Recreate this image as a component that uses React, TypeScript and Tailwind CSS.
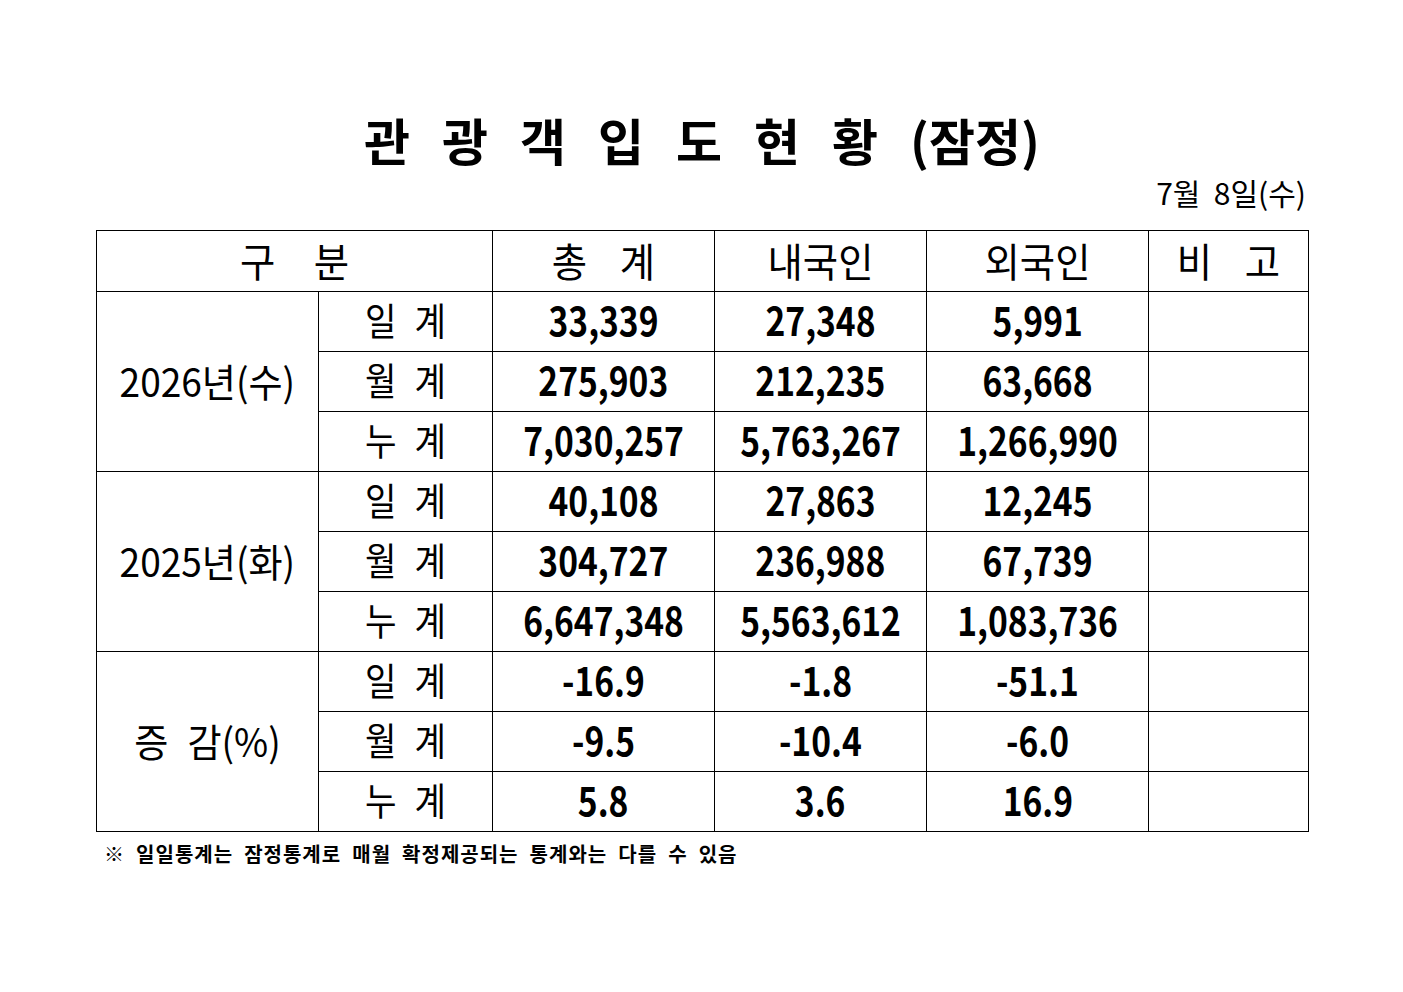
import React from "react";

const F = "font-['Noto_Sans_CJK_KR','Noto_Sans',sans-serif]";

function Spread({ parts, gap, cls }: { parts: string[]; gap: string; cls: string }) {
  return (
    <div className={`flex justify-center items-center ${gap} ${cls}`}>
      {parts.map((p, i) => (
        <span key={i}>{p}</span>
      ))}
    </div>
  );
}

const groups = [
  {
    label: "2026년(수)",
    rows: [
      ["일", "33,339", "27,348", "5,991"],
      ["월", "275,903", "212,235", "63,668"],
      ["누", "7,030,257", "5,763,267", "1,266,990"],
    ],
  },
  {
    label: "2025년(화)",
    rows: [
      ["일", "40,108", "27,863", "12,245"],
      ["월", "304,727", "236,988", "67,739"],
      ["누", "6,647,348", "5,563,612", "1,083,736"],
    ],
  },
  {
    label: "증 감(%)",
    rows: [
      ["일", "-16.9", "-1.8", "-51.1"],
      ["월", "-9.5", "-10.4", "-6.0"],
      ["누", "5.8", "3.6", "16.9"],
    ],
  },
];

const cell = "border border-black p-0 align-middle text-center";
const head = "text-[40px] leading-none scale-x-[0.96] pb-[2px]";

export default function App() {
  return (
    <div className={`w-[1403px] h-[992px] bg-white text-black ${F}`}>
      <div className="ml-[96px] w-[1212px] pt-[114px]">
        <div className="flex justify-center gap-[32px] text-[50px] font-bold leading-none h-[50px]">
          {["관", "광", "객", "입", "도", "현", "황"].map((c) => (
            <span key={c}>{c}</span>
          ))}
          <span>(잠정)</span>
        </div>
        <div className="mt-[13px] h-[30px] text-right text-[30px] leading-none pr-[2px] whitespace-pre">
          <span className="inline-block">7월  8일(수)</span>
        </div>
        <table className="mt-[23px] w-[1212px] table-fixed border-collapse">
          <colgroup>
            <col className="w-[222px]" />
            <col className="w-[174px]" />
            <col className="w-[222px]" />
            <col className="w-[212px]" />
            <col className="w-[222px]" />
            <col className="w-[160px]" />
          </colgroup>
          <thead>
            <tr className="h-[61px]">
              <th colSpan={2} className={`${cell} font-normal`}>
                <Spread parts={["구", "분"]} gap="gap-[40px]" cls={head} />
              </th>
              <th className={`${cell} font-normal`}>
                <Spread parts={["총", "계"]} gap="gap-[34px]" cls={head} />
              </th>
              <th className={`${cell} font-normal`}>
                <Spread parts={["내국인"]} gap="gap-0" cls={head} />
              </th>
              <th className={`${cell} font-normal`}>
                <Spread parts={["외국인"]} gap="gap-0" cls={head} />
              </th>
              <th className={`${cell} font-normal`}>
                <Spread parts={["비", "고"]} gap="gap-[34px]" cls={head} />
              </th>
            </tr>
          </thead>
          <tbody>
            {groups.map((g) =>
              g.rows.map((r, i) => (
                <tr key={g.label + i} className="h-[60px]">
                  {i === 0 && (
                    <td rowSpan={3} className={cell}>
                      {g.label === "증 감(%)" ? (
                        <Spread parts={["증", "감(%)"]} gap="gap-[20px]" cls="text-[39px] leading-none scale-x-[0.95] pb-[2px]" />
                      ) : (
                        <span className="inline-block text-[39px] leading-none scale-x-[0.95] pb-[2px]">{g.label}</span>
                      )}
                    </td>
                  )}
                  <td className={cell}>
                    <Spread parts={[r[0], "계"]} gap="gap-[20px]" cls="text-[38px] leading-none scale-x-[0.9] pb-[5px]" />
                  </td>
                  {r.slice(1).map((v, j) => (
                    <td key={j} className={cell}>
                      <span className="inline-block text-[40px] font-bold leading-none scale-x-[0.84] pb-[5px]">{v}</span>
                    </td>
                  ))}
                  <td className={cell}></td>
                </tr>
              ))
            )}
          </tbody>
        </table>
        <div className="mt-[12px] ml-[8px] text-[20px] font-bold leading-none whitespace-pre tracking-[1px]">
          ※  일일통계는  잠정통계로  매월  확정제공되는  통계와는  다를  수  있음
        </div>
      </div>
    </div>
  );
}
